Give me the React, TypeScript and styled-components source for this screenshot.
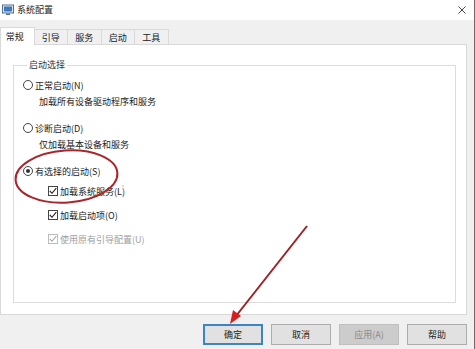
import React from "react";
import styled, { createGlobalStyle, css } from "styled-components";

const Global = createGlobalStyle`
  html, body { margin: 0; padding: 0; background: #f0f0f0; }
  body { font-family: "Noto Sans CJK SC", "Microsoft YaHei", sans-serif; font-size: 9px; color: #222; }
  * { box-sizing: border-box; }
`;

const Window = styled.div`
  position: relative;
  width: 475px;
  height: 349px;
  background: #f0f0f0;
  border-right: 1px solid #6b6b6b;
  display: flex;
  flex-direction: column;
  overflow: hidden;
`;

const TitleBar = styled.div`
  height: 20px;
  background: #ffffff;
  display: flex;
  align-items: center;
  padding: 0 8px 0 2px;
  gap: 3px;
`;

const Title = styled.span`
  flex: 1;
  font-size: 9px;
  color: #222;
  line-height: 20px;
`;

const Body = styled.div`
  flex: 1;
  display: flex;
  flex-direction: column;
  padding: 7px 7px 0 0;
`;

const TabStrip = styled.div`
  display: flex;
  height: 17px;
  align-items: flex-end;
  position: relative;
  z-index: 1;
`;

const Tab = styled.div<{ $active?: boolean }>`
  width: 34.5px;
  display: flex;
  align-items: center;
  justify-content: center;
  font-size: 9px;
  line-height: 1;
  color: #222;
  border: 1px solid #d9d9d9;
  border-bottom: none;
  margin-left: -1px;
  ${(p) =>
    p.$active
      ? css`
          height: 18px;
          background: #fff;
          margin-left: 0;
          margin-bottom: -1px;
          padding-right: 5px;
        `
      : css`
          height: 15px;
          background: #f0f0f0;
        `}
`;

const Panel = styled.div`
  height: 271px;
  background: #fff;
  border: 1px solid #d9d9d9;
  padding: 13px 10px 11px 12px;
  display: flex;
`;

const Group = styled.fieldset`
  flex: 1;
  margin: 0;
  border: 1px solid #dcdcdc;
  padding: 5px 0 0 9px;
  display: flex;
  flex-direction: column;
`;

const Legend = styled.legend`
  padding: 0 2px;
  margin-left: 4px;
  font-size: 9px;
  color: #333;
  line-height: 14px;
`;

const Row = styled.div<{ $indent?: number; $gap?: number; $disabled?: boolean }>`
  height: 16px;
  display: flex;
  align-items: center;
  gap: 2px;
  margin-left: ${(p) => p.$indent ?? 0}px;
  margin-top: ${(p) => p.$gap ?? 0}px;
  color: ${(p) => (p.$disabled ? "#a0a0a0" : "#222")};
  font-size: 9px;
  white-space: nowrap;
`;

const Radio = styled.span<{ $checked?: boolean }>`
  width: 10px;
  height: 10px;
  border: 1px solid #444;
  border-radius: 50%;
  display: inline-flex;
  align-items: center;
  justify-content: center;
  background: #fff;
  &::after {
    content: "";
    width: 4px;
    height: 4px;
    border-radius: 50%;
    background: ${(p) => (p.$checked ? "#333" : "transparent")};
  }
`;

const Check = styled.span<{ $disabled?: boolean }>`
  width: 10px;
  height: 10px;
  border: 1px solid ${(p) => (p.$disabled ? "#bcbcbc" : "#444")};
  display: inline-flex;
  align-items: center;
  justify-content: center;
  background: #fff;
  svg { display: block; }
`;

const Footer = styled.div`
  display: flex;
  justify-content: flex-end;
  gap: 8px;
  padding-top: 9px;
`;

const Button = styled.div<{ $default?: boolean; $disabled?: boolean }>`
  width: 60px;
  height: 21px;
  display: flex;
  align-items: center;
  justify-content: center;
  font-size: 9px;
  background: #e1e1e1;
  border: 1px solid #adadad;
  color: #222;
  ${(p) =>
    p.$default &&
    css`
      border: 2px solid #3c84c4;
    `}
  ${(p) =>
    p.$disabled &&
    css`
      background: #cccccc;
      border-color: #bfbfbf;
      color: #8a8a8a;
    `}
`;

const Overlay = styled.svg`
  position: absolute;
  left: 0;
  top: 0;
  pointer-events: none;
`;

const Tick = ({ color }: { color: string }) => (
  <svg width="8" height="8" viewBox="0 0 8 8">
    <path d="M0.8 4 L3 6.3 L7.3 1.2" fill="none" stroke={color} strokeWidth="1.1" />
  </svg>
);

export default function App() {
  return (
    <>
      <Global />
      <Window>
        <TitleBar>
          <svg width="12" height="12" viewBox="0 0 12 12">
            <rect x="0.5" y="1" width="11" height="8" fill="#dfe8f2" stroke="#55708e" />
            <rect x="2" y="2.5" width="8" height="5" fill="#3a78c0" />
            <rect x="4" y="9.5" width="4" height="1.5" fill="#55708e" />
          </svg>
          <Title>系统配置</Title>
          <svg width="8" height="8" viewBox="0 0 8 8">
            <path d="M0.5 0.5 L7.5 7.5 M7.5 0.5 L0.5 7.5" stroke="#333" strokeWidth="0.9" />
          </svg>
        </TitleBar>
        <Body>
          <TabStrip>
            <Tab $active>常规</Tab>
            <Tab>引导</Tab>
            <Tab>服务</Tab>
            <Tab>启动</Tab>
            <Tab>工具</Tab>
          </TabStrip>
          <Panel>
            <Group>
              <Legend>启动选择</Legend>
              <Row>
                <Radio />
                正常启动(N)
              </Row>
              <Row $indent={16}>加载所有设备驱动程序和服务</Row>
              <Row $gap={11}>
                <Radio />
                诊断启动(D)
              </Row>
              <Row $indent={16}>仅加载基本设备和服务</Row>
              <Row $gap={11}>
                <Radio $checked />
                有选择的启动(S)
              </Row>
              <Row $indent={25} $gap={4}>
                <Check>
                  <Tick color="#222" />
                </Check>
                加载系统服务(L)
              </Row>
              <Row $indent={25} $gap={8}>
                <Check>
                  <Tick color="#222" />
                </Check>
                加载启动项(O)
              </Row>
              <Row $indent={25} $gap={8} $disabled>
                <Check $disabled>
                  <Tick color="#a8a8a8" />
                </Check>
                使用原有引导配置(U)
              </Row>
            </Group>
          </Panel>
          <Footer>
            <Button $default>确定</Button>
            <Button>取消</Button>
            <Button $disabled>应用(A)</Button>
            <Button>帮助</Button>
          </Footer>
        </Body>
        <Overlay width="475" height="349" viewBox="0 0 475 349">
          <ellipse cx="66.5" cy="176.5" rx="51" ry="26" fill="none" stroke="#a8262c" strokeWidth="2" transform="rotate(-4 66.5 176.5)" />
          <line x1="307" y1="226" x2="236" y2="316" stroke="#9e1f24" strokeWidth="2" />
          <path d="M230 324 L233 310 L241 316 Z" fill="#d4201f" />
          <circle cx="123" cy="186" r="0.8" fill="#aaa" />
        </Overlay>
      </Window>
    </>
  );
}
